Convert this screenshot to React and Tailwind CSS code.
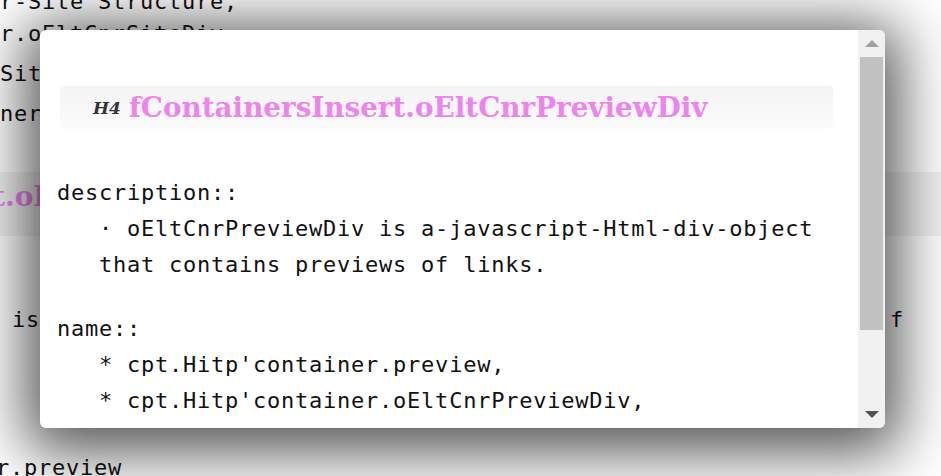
import React from "react";

const mono = { fontFamily: '"DejaVu Sans Mono", "Liberation Mono", monospace' };

const ScrollArrow = ({ up = false }) => (
  <div className="flex h-[27px] items-center justify-center">
    <div
      className={
        up
          ? "h-0 w-0 border-x-[7px] border-b-[7px] border-x-transparent border-b-[#a3a3a3]"
          : "h-0 w-0 border-x-[7px] border-t-[7px] border-x-transparent border-t-[#505050]"
      }
    />
  </div>
);

const nameLines = [
  "* cpt.Hitp'container.preview,",
  "* cpt.Hitp'container.oEltCnrPreviewDiv,",
  "* cpt.Hitp'oEltCnrSiteDiv.fContainersInsert,",
];

export default function App() {
  return (
    <div
      className="relative h-[476px] w-[941px] overflow-hidden bg-white text-[22px] tracking-[0.76px] text-[#111]"
      style={mono}
    >
      {/* page behind the popup */}
      <div className="-mt-[10px] h-[24px] whitespace-nowrap leading-[24px]">
        r-Site Structure,
      </div>
      <div className="h-[40px] whitespace-nowrap leading-[40px]">
        r.oEltCnrSiteDiv,
      </div>
      <div className="h-[40px] whitespace-nowrap leading-[40px]">
        SiteDiv
      </div>
      <div className="h-[40px] whitespace-nowrap leading-[40px]">
        nerSiteDiv
      </div>
      <div className="mt-[38px] flex h-[64px] items-start bg-[#f2f2f2]">
        <div className="-ml-[8px] mt-[1px] h-[48px] whitespace-nowrap font-['DejaVu_Serif',serif] text-[28px] font-bold leading-[48px] tracking-normal text-[#ee82ee]">
          t.oEltCnrPreviewDiv
        </div>
      </div>
      <div className="mt-[64px] flex h-[40px] items-center justify-between whitespace-nowrap pr-[37px] leading-[40px]">
        <span className="-ml-[16px]">r is a-javascript</span>
        <span>f</span>
      </div>
      <div className="-ml-[4px] mt-[108px] h-[40px] whitespace-nowrap leading-[40px]">
        r.preview
      </div>

      {/* popup */}
      <div className="absolute left-[40px] top-[30px] flex h-[398px] w-[845px] overflow-hidden rounded-[6px] bg-white shadow-[0_10px_60px_14px_rgba(0,0,0,0.68)]">
        <div className="flex-1 overflow-hidden pt-[56px]">
          <div className="ml-[20px] mr-[25px] flex h-[43px] items-center rounded-[4px] bg-gradient-to-b from-[#f4f4f4] to-[#fcfcfc] pl-[33px]">
            <span className="mr-[8px] mt-[2px] font-['DejaVu_Serif',serif] text-[17px] font-bold italic tracking-normal text-[#333]">
              H4
            </span>
            <span className="whitespace-nowrap font-['DejaVu_Serif',serif] text-[27.8px] font-bold tracking-normal text-[#ee82ee]">
              fContainersInsert.oEltCnrPreviewDiv
            </span>
          </div>

          <div className="mt-[46px] whitespace-nowrap pl-[17px] leading-[36px]">
            <div>description::</div>
            <div className="pl-[42px]">
              · oEltCnrPreviewDiv is a-javascript-Html-div-object
            </div>
            <div className="pl-[42px]">that contains previews of links.</div>
            <div className="mt-[28px]">name::</div>
            {nameLines.map((line) => (
              <div key={line} className="pl-[42px]">
                {line}
              </div>
            ))}
          </div>
        </div>

        <div className="flex w-[27px] flex-col bg-[#f1f1f1]">
          <ScrollArrow up />
          <div className="flex-1 px-[2px]">
            <div className="h-[273px] bg-[#c1c1c1]" />
          </div>
          <ScrollArrow />
        </div>
      </div>
    </div>
  );
}
